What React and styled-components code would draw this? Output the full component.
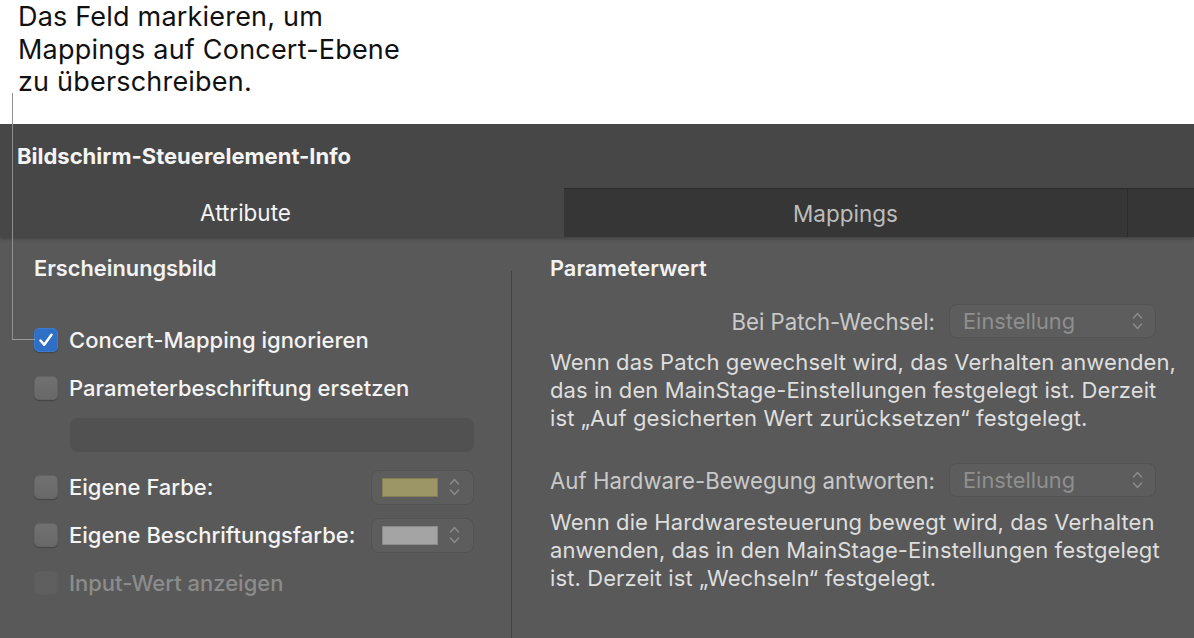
import styled, { createGlobalStyle } from "styled-components";

const GlobalStyle = createGlobalStyle`
  html, body {
    margin: 0;
    padding: 0;
    background: #ffffff;
  }
  body {
    font-family: Inter, "Noto Sans", "Liberation Sans", sans-serif;
    -webkit-font-smoothing: antialiased;
  }
`;

const Page = styled.div`
  position: relative;
  width: 1194px;
  height: 638px;
  overflow: hidden;
`;

const Callout = styled.div`
  height: 124px;
  padding: 1px 0 0 18px;
  box-sizing: border-box;
  font-size: 27px;
  line-height: 32.5px;
  letter-spacing: 0.2px;
  color: #111;
`;

// leader line from the callout down to the first checkbox
const LeaderV = styled.div`
  position: absolute;
  z-index: 2;
  left: 12px;
  top: 93px;
  width: 1px;
  height: 247px;
  background: #8f8f8f;
`;

const LeaderH = styled.div`
  position: absolute;
  z-index: 2;
  left: 12px;
  top: 339px;
  width: 23px;
  height: 1px;
  background: #9a9a9a;
`;

const Panel = styled.div`
  background: #595959;
  height: 514px;
  display: flex;
  flex-direction: column;
`;

const TitleBar = styled.div`
  height: 64px;
  background: #474747;
  display: flex;
  align-items: center;
  padding-left: 17px;
  font-size: 22px;
  font-weight: 700;
  color: #f4f4f4;
`;

const TabBar = styled.div`
  display: flex;
  height: 49px;
  background: #363636;
  box-shadow: 0 2px 3px rgba(0, 0, 0, 0.25);
  position: relative;
  z-index: 1;
`;

const Tab = styled.div`
  width: ${(p) => p.$width}px;
  padding-right: ${(p) => p.$shift || 0}px;
  box-sizing: border-box;
  display: flex;
  align-items: center;
  justify-content: center;
  font-size: 22.5px;
  background: ${(p) => (p.$active ? "#474747" : "#363636")};
  color: ${(p) => (p.$active ? "#f4f4f4" : "#bdbdbd")};
  border-top: ${(p) => (p.$active ? "none" : "1px solid #2b2b2b")};
  border-right: ${(p) => (p.$divider ? "1px solid #2c2c2c" : "none")};
`;

const Body = styled.div`
  flex: 1;
  display: grid;
  grid-template-columns: 511px 1px 1fr;
`;

const LeftCol = styled.div`
  padding: 19px 37px 0 34px;
`;

const Divider = styled.div`
  margin-top: 34px;
  background: #424242;
`;

const RightCol = styled.div`
  padding: 19px 8px 0 38px;
`;

const Heading = styled.div`
  font-size: 21.8px;
  line-height: 24px;
  font-weight: 600;
  color: #f2f2f2;
`;

const CheckList = styled.div`
  margin-top: 36px;
  display: flex;
  flex-direction: column;
`;

const CheckRow = styled.div`
  height: 48px;
  display: flex;
  align-items: center;
  gap: 11px;
  font-size: 22px;
  font-weight: 500;
  color: ${(p) => (p.$disabled ? "#8c8c8c" : "#f4f4f4")};
`;

const Box = styled.span`
  width: 24px;
  height: 24px;
  flex: none;
  border-radius: 5px;
  box-sizing: border-box;
  display: flex;
  align-items: center;
  justify-content: center;
  background: ${(p) =>
    p.$checked
      ? "#2f6fc6"
      : p.$disabled
      ? "#5f5f5f"
      : "linear-gradient(#717171, #686868)"};
  border: 1px solid ${(p) => (p.$checked ? "#3a7bd0" : p.$disabled ? "#5c5c5c" : "#636363")};
  box-shadow: ${(p) => (p.$disabled ? "none" : "0 1px 1px rgba(0,0,0,0.25)")};
`;

const TextField = styled.div`
  margin: 6px 0 11px 36px;
  height: 34px;
  border-radius: 8px;
  background: #515151;
`;

const Well = styled.div`
  margin-left: auto;
  width: 103px;
  height: 35px;
  box-sizing: border-box;
  border-radius: 8px;
  background: #5d5d5d;
  border: 1px solid #535353;
  display: flex;
  align-items: center;
  padding: 0 10px;
  gap: 11px;
`;

const Swatch = styled.span`
  width: 56px;
  height: 19px;
  background: ${(p) => p.$color};
  border: 1px solid rgba(0, 0, 0, 0.15);
  box-sizing: border-box;
`;

const PopupRow = styled.div`
  display: flex;
  align-items: center;
  justify-content: flex-end;
  gap: 14px;
  margin-top: ${(p) => p.$top}px;
  padding-right: 30px;
  font-size: 22.2px;
  color: #c9c9c9;
  white-space: nowrap;
`;

const Popup = styled.div`
  width: 207px;
  height: 34px;
  flex: none;
  box-sizing: border-box;
  border-radius: 8px;
  background: #5d5d5d;
  border: 1px solid #535353;
  display: flex;
  align-items: center;
  justify-content: space-between;
  padding: 0 12px 0 13px;
  color: #8f8f8f;
  font-size: 21.8px;
`;

const Note = styled.p`
  margin: ${(p) => p.$top}px 0 0;
  font-size: 22px;
  line-height: 28px;
  letter-spacing: 0.1px;
  color: #dedede;
  white-space: nowrap;
`;

const Chevrons = () => (
  <svg width="11" height="20" viewBox="0 0 11 20" fill="none">
    <path
      d="M1.5 7 L5.5 2.5 L9.5 7 M1.5 13 L5.5 17.5 L9.5 13"
      stroke="#8a8a8a"
      strokeWidth="1.6"
      strokeLinecap="round"
      strokeLinejoin="round"
    />
  </svg>
);

const Check = () => (
  <svg width="18" height="18" viewBox="0 0 18 18" fill="none">
    <path
      d="M3.5 9.5 L7.2 13.8 L14.5 3.8"
      stroke="#ffffff"
      strokeWidth="2.5"
      strokeLinecap="round"
      strokeLinejoin="round"
    />
  </svg>
);

const Checkbox = ({ checked, disabled, children, well }) => (
  <CheckRow $disabled={disabled}>
    <Box $checked={checked} $disabled={disabled}>
      {checked && <Check />}
    </Box>
    {children}
    {well && (
      <Well>
        <Swatch $color={well} />
        <Chevrons />
      </Well>
    )}
  </CheckRow>
);

export default function App() {
  return (
    <Page>
      <GlobalStyle />
      <Callout>
        Das Feld markieren, um
        <br />
        Mappings auf Concert-Ebene
        <br />
        zu überschreiben.
      </Callout>

      <Panel>
        <TitleBar>Bildschirm-Steuerelement-Info</TitleBar>
        <TabBar>
          <Tab $width={564} $shift={73} $active>
            Attribute
          </Tab>
          <Tab $width={564} $divider>
            Mappings
          </Tab>
          <Tab $width={66} />
        </TabBar>

        <Body>
          <LeftCol>
            <Heading>Erscheinungsbild</Heading>
            <CheckList>
              <Checkbox checked>Concert-Mapping ignorieren</Checkbox>
              <Checkbox>Parameterbeschriftung ersetzen</Checkbox>
              <TextField />
              <Checkbox well="#9c9566">Eigene Farbe:</Checkbox>
              <Checkbox well="#a4a4a4">Eigene Beschriftungsfarbe:</Checkbox>
              <Checkbox disabled>Input-Wert anzeigen</Checkbox>
            </CheckList>
          </LeftCol>

          <Divider />

          <RightCol>
            <Heading>Parameterwert</Heading>
            <PopupRow $top={24}>
              Bei Patch-Wechsel:
              <Popup>
                Einstellung
                <Chevrons />
              </Popup>
            </PopupRow>
            <Note $top={10}>
              Wenn das Patch gewechselt wird, das Verhalten anwenden,
              <br />
              das in den MainStage-Einstellungen festgelegt ist. Derzeit
              <br />
              ist „Auf gesicherten Wert zurücksetzen“ festgelegt.
            </Note>
            <PopupRow $top={31}>
              Auf Hardware-Bewegung antworten:
              <Popup>
                Einstellung
                <Chevrons />
              </Popup>
            </PopupRow>
            <Note $top={11}>
              Wenn die Hardwaresteuerung bewegt wird, das Verhalten
              <br />
              anwenden, das in den MainStage-Einstellungen festgelegt
              <br />
              ist. Derzeit ist „Wechseln“ festgelegt.
            </Note>
          </RightCol>
        </Body>
      </Panel>

      <LeaderV />
      <LeaderH />
    </Page>
  );
}
